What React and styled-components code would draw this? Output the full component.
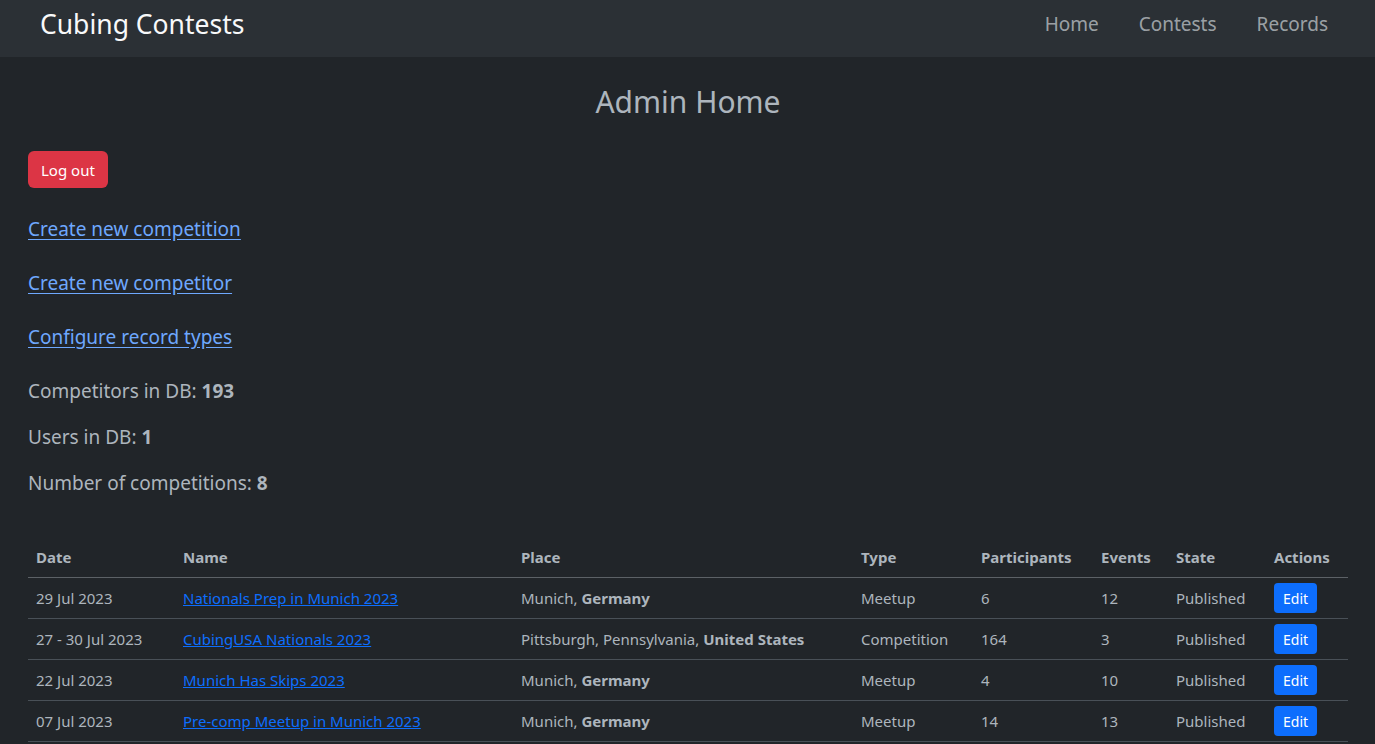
import React from 'react';
import styled, { createGlobalStyle } from 'styled-components';

const GlobalStyle = createGlobalStyle`
  body {
    margin: 0;
    background: #212529;
    color: #adb5bd;
    font-family: "Noto Sans", "Open Sans", sans-serif;
  }
  * { box-sizing: border-box; }
`;

const Navbar = styled.nav`
  height: 57px;
  background: #2b3035;
  display: flex;
  align-items: center;
  justify-content: space-between;
  padding: 0 27px 0 40px;
`;

const Brand = styled.a`
  color: #f8f9fa;
  font-size: 26.5px;
  text-decoration: none;
  margin-top: -10px;
`;

const NavLinks = styled.div`
  display: flex;
  margin-top: -10px;
`;

const NavLink = styled.a`
  color: rgba(222, 226, 230, 0.65);
  font-size: 19px;
  text-decoration: none;
  padding: 0 20px;
`;

const Main = styled.main`
  padding: 0 27px 0 28px;
`;

const Title = styled.h2`
  text-align: center;
  font-weight: 400;
  font-size: 30px;
  margin: 24px 0 29px;
  color: #adb5bd;
`;

const DangerButton = styled.button`
  background: #dc3545;
  color: #fff;
  border: none;
  border-radius: 6px;
  height: 37px;
  padding: 0 13px;
  font-family: inherit;
  font-size: 15px;
  margin-bottom: 28px;
`;

const AdminLink = styled.a`
  display: block;
  color: #6ea8fe;
  font-size: 19px;
  text-decoration: underline;
  text-underline-offset: 3px;
  margin-bottom: 27px;
  line-height: 27px;
`;

const Stat = styled.p`
  font-size: 19px;
  margin: 0 0 19px;
  line-height: 27px;
  b { font-weight: 700; }
`;

const Table = styled.table`
  width: 100%;
  border-collapse: collapse;
  margin-top: 41px;
  font-size: 15px;
`;

const Th = styled.th`
  text-align: left;
  font-weight: 700;
  font-size: 15px;
  padding: 9px 8px 10px;
  border-bottom: 1px solid #5c6166;
  color: #adb5bd;
`;

const Td = styled.td`
  padding: 0 8px;
  height: 41px;
  border-bottom: 1px solid #495057;
  color: #adb5bd;
  b { font-weight: 700; }
`;

const TableLink = styled.a`
  color: #0d6efd;
  text-decoration: underline;
`;

const EditButton = styled.button`
  background: #0d6efd;
  color: #fff;
  border: none;
  border-radius: 4px;
  height: 30px;
  padding: 0 9px;
  font-family: inherit;
  font-size: 14px;
`;

const contests = [
  { date: '29 Jul 2023', name: 'Nationals Prep in Munich 2023', city: 'Munich', country: 'Germany', type: 'Meetup', participants: 6, events: 12 },
  { date: '27 - 30 Jul 2023', name: 'CubingUSA Nationals 2023', city: 'Pittsburgh, Pennsylvania', country: 'United States', type: 'Competition', participants: 164, events: 3 },
  { date: '22 Jul 2023', name: 'Munich Has Skips 2023', city: 'Munich', country: 'Germany', type: 'Meetup', participants: 4, events: 10 },
  { date: '07 Jul 2023', name: 'Pre-comp Meetup in Munich 2023', city: 'Munich', country: 'Germany', type: 'Meetup', participants: 14, events: 13 },
];

const columns = [
  ['Date', 147], ['Name', 338], ['Place', 340], ['Type', 120],
  ['Participants', 120], ['Events', 75], ['State', 98], ['Actions', null],
];

export default function App() {
  return (
    <>
      <GlobalStyle />
      <Navbar>
        <Brand href="#">Cubing Contests</Brand>
        <NavLinks>
          <NavLink href="#">Home</NavLink>
          <NavLink href="#">Contests</NavLink>
          <NavLink href="#">Records</NavLink>
        </NavLinks>
      </Navbar>
      <Main>
        <Title>Admin Home</Title>
        <DangerButton>Log out</DangerButton>
        <AdminLink href="#">Create new competition</AdminLink>
        <AdminLink href="#">Create new competitor</AdminLink>
        <AdminLink href="#">Configure record types</AdminLink>
        <Stat>Competitors in DB: <b>193</b></Stat>
        <Stat>Users in DB: <b>1</b></Stat>
        <Stat>Number of competitions: <b>8</b></Stat>
        <Table>
          <colgroup>
            {columns.map(([n, w]) => <col key={n} style={w ? { width: w } : undefined} />)}
          </colgroup>
          <thead>
            <tr>{columns.map(([n]) => <Th key={n}>{n}</Th>)}</tr>
          </thead>
          <tbody>
            {contests.map((c) => (
              <tr key={c.name}>
                <Td>{c.date}</Td>
                <Td><TableLink href="#">{c.name}</TableLink></Td>
                <Td>{c.city}, <b>{c.country}</b></Td>
                <Td>{c.type}</Td>
                <Td>{c.participants}</Td>
                <Td>{c.events}</Td>
                <Td>Published</Td>
                <Td><EditButton>Edit</EditButton></Td>
              </tr>
            ))}
          </tbody>
        </Table>
      </Main>
    </>
  );
}
